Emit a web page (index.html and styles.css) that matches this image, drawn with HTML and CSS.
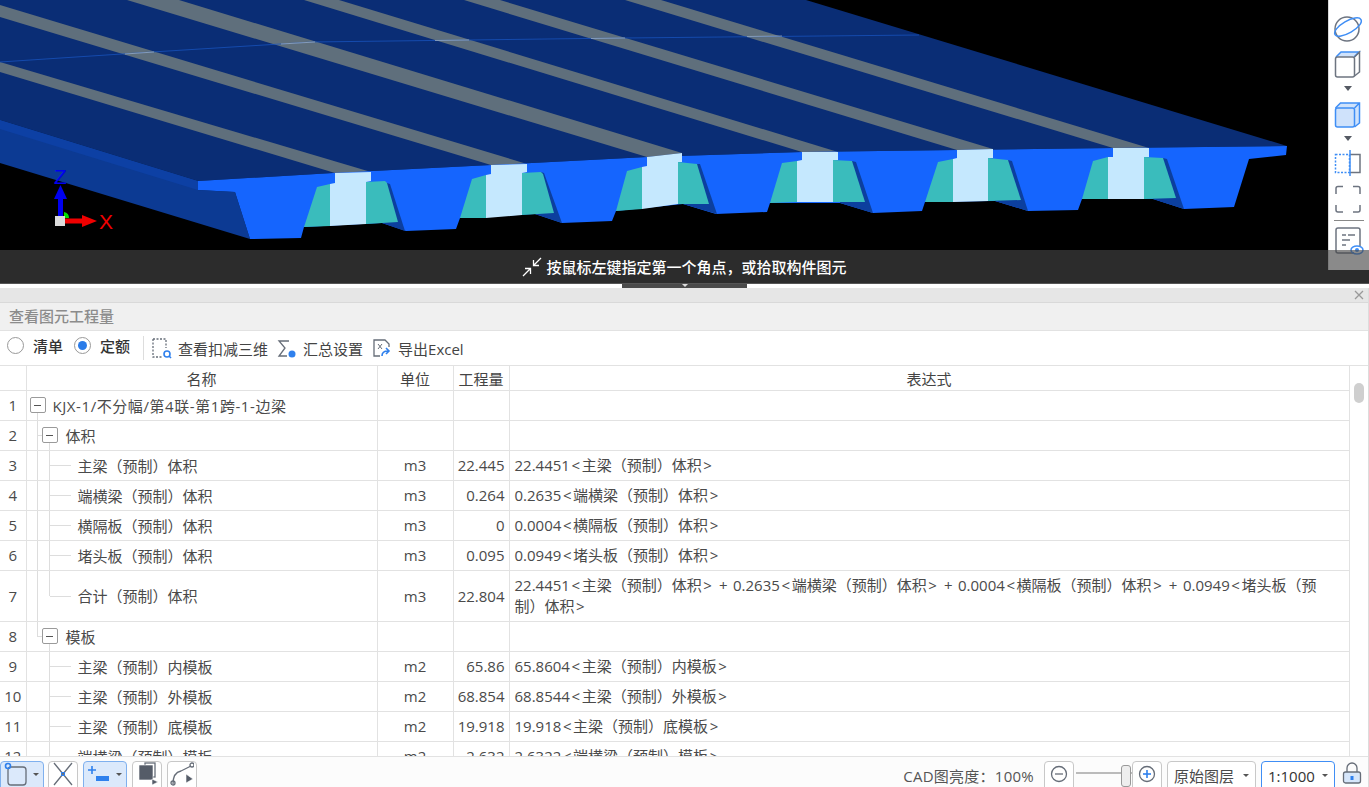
FILE: index.html
```html
<!DOCTYPE html>
<html lang="zh-CN">
<head>
<meta charset="utf-8">
<title>查看图元工程量</title>
<link rel="stylesheet" href="styles.css">
</head>
<body>
<div class="app">
  <section class="viewport">
    <svg class="scene" width="1369" height="283" viewBox="0 0 1369 283" aria-label="三维视图">
      <polygon class="deck" points="0,0 806,0 1287,146 1113,148 957,150 802,152 647,157 491,165 333,173 198,181 0,120"/>
      <g class="strip">
        <polygon points="0,62 371,172 335,173 0,72"/>
        <polygon points="0,5 527,164 491,165 0,17"/>
        <polygon points="127,0 179,0 682,153 647,157"/>
        <polygon points="304,0 339,0 838,152 802,152"/>
        <polygon points="464,0 500,0 993,149 957,150"/>
        <polygon points="625,0 661,0 1149,148 1113,148"/>
      </g>
      <polyline class="seam" points="0,62 152,52 312,42 469,40 625,38 919,35"/>
      <g class="seam-light">
        <path d="M125 54L154 52"/>
        <path d="M281 44L315 42"/>
        <path d="M435 40.500L469 40"/>
        <path d="M591 38.500L625 38"/>
        <path d="M747 36.500L782 36"/>
      </g>
      <polygon class="side" points="0,120 198,181 198,190 235,192 250,239 0,163"/>
      <polygon class="side-band" points="0,120 198,181 198,190 0,129"/>
      <polygon class="front" points="198,181 333,173 491,165 647,157 802,152 957,150 1113,148 1287,146 1286,155 1249,159 1234,207 1184,209 1153,199 1082,199 1078,210 1028,211 995,201 925,202 922,211 873,213 840,203 770,203 767,212 716,214 683,204 616,211 612,221 562,223 535,214 460,218 456,229 406,231 382,223 304,227 301,238 250,239 235,192 198,190"/>
      <g class="shade">
        <polygon points="387,183 390,184 405,231 382,223"/>
        <polygon points="541,172 544,173 562,223 535,214"/>
        <polygon points="697,164 700,164 717,214 683,204"/>
        <polygon points="852,161 856,162 873,213 840,203"/>
        <polygon points="1008,160 1012,161 1028,211 995,201"/>
        <polygon points="1163,158 1167,159 1184,209 1153,199"/>
      </g>
      <g class="teal">
        <polygon points="317,187 330,184 330,226 304,227"/>
        <polygon points="366,182 385,181 387,183 398,222 366,224"/>
        <polygon points="472,179 486,175 486,218 460,218"/>
        <polygon points="522,173 541,172 543,174 554,213 522,215"/>
        <polygon points="627,171 642,167 642,209 616,211"/>
        <polygon points="678,162 697,164 709,204 678,204"/>
        <polygon points="782,163 797,161 797,202 770,203"/>
        <polygon points="833,160 852,161 865,202 833,202"/>
        <polygon points="938,162 953,159 953,202 925,202"/>
        <polygon points="988,158 1008,160 1021,200 988,201"/>
        <polygon points="1093,161 1108,157 1108,199 1082,199"/>
        <polygon points="1144,157 1163,158 1176,198 1144,199"/>
      </g>
      <g class="light">
        <polygon points="335,173 371,172 371,181 366,182 366,224 330,226 330,184 335,183"/>
        <polygon points="491,165 527,164 527,172 522,173 522,215 486,218 486,175 491,174"/>
        <polygon points="647,157 682,153 682,162 678,162 678,204 642,209 642,167 647,166"/>
        <polygon points="802,152 838,152 838,160 833,160 833,202 797,202 797,161 802,160"/>
        <polygon points="957,150 993,149 993,158 988,158 988,201 953,202 953,159 957,158"/>
        <polygon points="1113,148 1149,148 1149,157 1144,157 1144,199 1108,199 1108,157 1113,157"/>
      </g>
      <path class="axis-green" d="M64 212a6 6 0 0 1 5 6h-5z"/>
      <rect class="axis-z" x="58" y="196" width="5" height="20"/>
      <polygon class="axis-z" points="60.500,185 67,199 54,199"/>
      <rect class="axis-x" x="65" y="218.500" width="18" height="5"/>
      <polygon class="axis-x" points="97,221 82,215 82,227"/>
      <rect class="axis-o" x="55" y="216" width="10" height="10"/>
      <text class="axis-label label-z" x="54" y="184">Z</text>
      <text class="axis-label label-x" x="99" y="229">X</text>
    </svg>

    <aside class="view-tools">
      <svg width="41" height="46" viewBox="0 0 41 46" class="vt">
        <circle cx="19" cy="29" r="12" class="g"/>
        <ellipse cx="20" cy="27" rx="15" ry="6" transform="rotate(-30 20 27)" class="b"/>
      </svg>
      <svg width="41" height="36" viewBox="0 0 41 36" class="vt">
        <path d="M8 11l5-5h18l-5 5z" class="bf"/>
        <path d="M8 11l5-5h18l-5 5" class="b"/>
        <rect x="7.500" y="11" width="19" height="20" rx="2" class="g"/>
        <path d="M26.500 11l5-5v20l-5 4" class="g"/>
      </svg>
      <svg width="41" height="14" viewBox="0 0 41 14" class="vt"><polygon points="16,4 24,4 20,9" class="tri"/></svg>
      <svg width="41" height="36" viewBox="0 0 41 36" class="vt">
        <path d="M7.500 12l5-5h19v20l-5 4H9.500a2 2 0 0 1-2-2z" class="bf"/>
        <rect x="7.500" y="12" width="19" height="19" rx="2" class="b"/>
        <path d="M7.500 12l5-5h19v20l-5 4M26.500 12l5-5" class="b"/>
      </svg>
      <svg width="41" height="14" viewBox="0 0 41 14" class="vt"><polygon points="16,4 24,4 20,9" class="tri"/></svg>
      <svg width="41" height="34" viewBox="0 0 41 34" class="vt">
        <rect x="7.500" y="8.500" width="14" height="18" class="bd"/>
        <path d="M22 8.500h10v18H22" class="g"/>
        <path d="M22 4v26" class="b"/>
      </svg>
      <svg width="41" height="36" viewBox="0 0 41 36" class="vt">
        <path d="M8 14V8.500a2 2 0 0 1 2-2h5M25 6.500h5a2 2 0 0 1 2 2V14M32 25v5a2 2 0 0 1-2 2h-5M15 32h-5a2 2 0 0 1-2-2v-5" class="g"/>
      </svg>
      <div class="vt-sep"></div>
      <svg width="41" height="46" viewBox="0 0 41 46" class="vt">
        <path d="M26 29H10a2 2 0 0 1-2-2V6a2 2 0 0 1 2-2h20a2 2 0 0 1 2 2v16" class="g"/>
        <path d="M14 11h4M20 11h7M14 16h8M14 21h4" class="g"/>
        <ellipse cx="29" cy="26" rx="6" ry="4" class="b"/>
        <circle cx="29" cy="26" r="2" class="bs"/>
      </svg>
    </aside>

    <div class="prompt">
      <svg class="prompt-icon" width="20" height="20" viewBox="0 0 20 20">
        <path d="M1 19l7-7M3 11.500h5.500V17M19 1l-7 7M17 8.500h-5.500V3"/>
      </svg>
      <span>按鼠标左键指定第一个角点，或拾取构件图元</span>
    </div>
  </section>

  <div class="splitter"><div class="splitter-handle"><i></i></div></div>

  <section class="panel">
    <div class="dock-bar"><svg class="close" width="10" height="10" viewBox="0 0 10 10"><path d="M1 1l8 8M9 1l-8 8"/></svg></div>
    <div class="panel-title">查看图元工程量</div>
    <div class="panel-tools">
      <span class="radio"></span><span class="radio-label">清单</span>
      <span class="radio on"></span><span class="radio-label">定额</span>
      <span class="tool-sep"></span>
      <span class="tool">
        <svg width="20" height="22" viewBox="0 0 20 22"><path d="M1 2h13v9M1 2v18h9" class="dash"/><circle cx="15" cy="17" r="3" class="blue"/><path d="M17 19l2 2" class="blue"/></svg>
        查看扣减三维
      </span>
      <span class="tool">
        <svg width="20" height="22" viewBox="0 0 20 22"><path d="M12 4H2l6 7-6 8h8" class="line"/><circle cx="15" cy="17" r="3.500" class="bluefill"/></svg>
        汇总设置
      </span>
      <span class="tool">
        <svg width="20" height="22" viewBox="0 0 20 22"><path d="M8 19H2V3h11l4 4v3" class="line"/><path d="M6 7l4 5M10 7l-4 5" class="thin"/><path d="M10 19c0-4 3-5 6-5M14 11l3 3-3 3" class="blue"/></svg>
        导出Excel
      </span>
    </div>

    <div class="grid-wrap">
      <table class="grid">
        <colgroup><col class="c-no"><col class="c-name"><col class="c-unit"><col class="c-qty"><col class="c-expr"></colgroup>
        <thead>
          <tr><th></th><th>名称</th><th>单位</th><th>工程量</th><th>表达式</th></tr>
        </thead>
        <tbody>
          <tr><td class="no">1</td><td><div class="node l0"><span class="box"></span><span class="root-name">KJX-1/不分幅/第4联-第1跨-1-边梁</span></div></td><td></td><td></td><td></td></tr>
          <tr><td class="no">2</td><td><div class="node l1"><span class="box"></span>体积</div></td><td></td><td></td><td></td></tr>
          <tr><td class="no">3</td><td><div class="node leaf outer">主梁（预制）体积</div></td><td class="unit">m3</td><td class="qty">22.445</td><td class="expr">22.4451<span class="ab">&lt;</span>主梁（预制）体积<span class="ab">&gt;</span></td></tr>
          <tr><td class="no">4</td><td><div class="node leaf outer">端横梁（预制）体积</div></td><td class="unit">m3</td><td class="qty">0.264</td><td class="expr">0.2635<span class="ab">&lt;</span>端横梁（预制）体积<span class="ab">&gt;</span></td></tr>
          <tr><td class="no">5</td><td><div class="node leaf outer">横隔板（预制）体积</div></td><td class="unit">m3</td><td class="qty">0</td><td class="expr">0.0004<span class="ab">&lt;</span>横隔板（预制）体积<span class="ab">&gt;</span></td></tr>
          <tr><td class="no">6</td><td><div class="node leaf outer">堵头板（预制）体积</div></td><td class="unit">m3</td><td class="qty">0.095</td><td class="expr">0.0949<span class="ab">&lt;</span>堵头板（预制）体积<span class="ab">&gt;</span></td></tr>
          <tr class="tall"><td class="no">7</td><td><div class="node leaf outer last">合计（预制）体积</div></td><td class="unit">m3</td><td class="qty">22.804</td><td class="expr">22.4451<span class="ab">&lt;</span>主梁（预制）体积<span class="ab">&gt;</span> <span class="ab">+</span> 0.2635<span class="ab">&lt;</span>端横梁（预制）体积<span class="ab">&gt;</span> <span class="ab">+</span> 0.0004<span class="ab">&lt;</span>横隔板（预制）体积<span class="ab">&gt;</span> <span class="ab">+</span> 0.0949<span class="ab">&lt;</span>堵头板（预<br>制）体积<span class="ab">&gt;</span></td></tr>
          <tr><td class="no">8</td><td><div class="node l1 end"><span class="box"></span>模板</div></td><td></td><td></td><td></td></tr>
          <tr><td class="no">9</td><td><div class="node leaf">主梁（预制）内模板</div></td><td class="unit">m2</td><td class="qty">65.86</td><td class="expr">65.8604<span class="ab">&lt;</span>主梁（预制）内模板<span class="ab">&gt;</span></td></tr>
          <tr><td class="no">10</td><td><div class="node leaf">主梁（预制）外模板</div></td><td class="unit">m2</td><td class="qty">68.854</td><td class="expr">68.8544<span class="ab">&lt;</span>主梁（预制）外模板<span class="ab">&gt;</span></td></tr>
          <tr><td class="no">11</td><td><div class="node leaf">主梁（预制）底模板</div></td><td class="unit">m2</td><td class="qty">19.918</td><td class="expr">19.918<span class="ab">&lt;</span>主梁（预制）底模板<span class="ab">&gt;</span></td></tr>
          <tr><td class="no">12</td><td><div class="node leaf">端横梁（预制）模板</div></td><td class="unit">m2</td><td class="qty">2.632</td><td class="expr">2.6322<span class="ab">&lt;</span>端横梁（预制）模板<span class="ab">&gt;</span></td></tr>
        </tbody>
      </table>
      <div class="scroll-col"><div class="scroll-thumb"></div></div>
    </div>

    <footer class="status">
      <button class="sbtn wide active first">
        <svg width="24" height="24" viewBox="0 0 24 24"><rect x="5" y="5" width="18" height="18" rx="3" class="line"/><circle cx="5" cy="4" r="2.500" class="blue"/></svg>
        <i class="caret"></i>
      </button>
      <button class="sbtn">
        <svg width="24" height="24" viewBox="0 0 24 24"><path d="M3 1l18 22M21 1L3 23" class="line"/><rect x="10.500" y="10.500" width="3" height="3" class="blue-thin"/></svg>
      </button>
      <button class="sbtn wide active">
        <svg width="24" height="24" viewBox="0 0 24 24"><path d="M2 8h8M6 4v8" class="blue"/><rect x="10" y="14" width="13" height="5" class="bluefill"/></svg>
        <i class="caret"></i>
      </button>
      <button class="sbtn">
        <svg width="24" height="24" viewBox="0 0 24 24"><rect x="10" y="1" width="10" height="14" class="line"/><rect x="4" y="3" width="14" height="15" class="darkfill"/><path d="M17 17l6 3-6 3z" class="darkfill"/></svg>
      </button>
      <button class="sbtn">
        <svg width="24" height="24" viewBox="0 0 24 24"><path d="M3 22c0-8 3-12 8-13l10-5" class="line"/><circle cx="3" cy="21" r="2" class="line"/><circle cx="22" cy="3" r="2" class="line"/><path d="M16 12l7 5-7 4z" class="darkfill"/></svg>
      </button>
      <div class="status-right">
        <span class="cad-label">CAD图亮度：100%</span>
        <button class="sbtn zoom-btn"><svg width="18" height="18" viewBox="0 0 18 18"><circle cx="9" cy="9" r="7.500" class="line"/><path d="M5 9h8" class="line"/></svg></button>
        <div class="slider"><span class="slider-thumb"></span></div>
        <button class="sbtn zoom-btn"><svg width="18" height="18" viewBox="0 0 18 18"><circle cx="9" cy="9" r="7.500" class="line"/><path d="M5 9h8" class="blue"/><path d="M9 5v8" class="blue"/></svg></button>
        <div class="select layer">原始图层<i class="caret"></i></div>
        <div class="select scale">1:1000<i class="caret"></i></div>
        <svg class="lock" width="20" height="22" viewBox="0 0 20 22"><path d="M5 10V6a5 5 0 0 1 10 0v4" class="line"/><rect x="1.500" y="10" width="17" height="11" rx="2" class="lockbody"/><rect x="8.500" y="14" width="3" height="4" class="bluefill"/></svg>
      </div>
    </footer>
  </section>
</div>
</body>
</html>
```
FILE: styles.css
```css
* { box-sizing: border-box; }
html, body { margin: 0; padding: 0; height: 100%; overflow: hidden; background: #fff; }
body { font-family: "Open Sans", "Noto Sans CJK SC", sans-serif; font-size: 15px; color: #4a4a4a; }
.app { display: flex; flex-direction: column; width: 1369px; height: 787px; overflow: hidden; }

/* 3D viewport */
.viewport { position: relative; height: 283px; flex: none; background: #000; overflow: hidden; }
.scene { display: block; }
.deck { fill: #0a2d75; }
.strip polygon { fill: #5f6f7c; }
.seam { fill: none; stroke: #1a57c4; stroke-width: 1; opacity: .7; }
.seam-light path { fill: none; stroke: #a9b6bf; stroke-width: 1; opacity: .7; }
.side { fill: #0c3a93; }
.side-band { fill: #0d40a4; }
.front { fill: #1565fe; }
.shade polygon { fill: #0c3f9e; }
.teal polygon { fill: #3abcbc; }
.light polygon { fill: #c5e8fe; }
.axis-z { fill: #0000f0; }
.axis-x { fill: #f00000; }
.axis-o { fill: #dcdcdc; }
.axis-green { fill: #00e000; }
.axis-label { font-family: "Liberation Sans", sans-serif; font-size: 21px; }
.label-z { fill: #0000f0; }
.label-x { fill: #f00000; }

.view-tools { position: absolute; top: 0; right: 0; width: 41px; height: 270px; background: #fff; border-left: 1px solid #d8d8d8; overflow: hidden; }
.vt { display: block; margin-left: -1px; }
.vt .g { fill: none; stroke: #6d7480; stroke-width: 1.500; }
.vt .b { fill: none; stroke: #3f8ef5; stroke-width: 1.500; }
.vt .bd { fill: none; stroke: #3f8ef5; stroke-width: 1.500; stroke-dasharray: 2 1.500; }
.vt .bf { fill: #cfe2fb; }
.vt .bs { fill: #3f8ef5; }
.vt .tri { fill: #555a63; }
.vt-sep { height: 1px; margin: 4px 5px 3px 5px; background: #888; }

.prompt { position: absolute; left: 0; right: 0; bottom: 0; height: 33px; background: rgba(70, 70, 70, .63); display: flex; align-items: center; justify-content: center; gap: 4px; color: #fff; font-size: 15px; font-weight: 500; }
.prompt-icon { fill: none; stroke: #fff; stroke-width: 1.300; }

/* Splitter */
.splitter { height: 5px; flex: none; background: #fff; border-top: 1px solid #555; display: flex; justify-content: center; }
.splitter-handle { width: 125px; height: 4px; background: #4a4a4a; display: flex; justify-content: center; }
.splitter-handle i { width: 0; height: 0; border: 3px solid transparent; border-top-color: #ddd; border-bottom: 0; }

/* Panel */
.panel { flex: 1; min-height: 0; display: flex; flex-direction: column; border-right: 1px solid #dcdcdc; }
.dock-bar { height: 15px; flex: none; background: #e6e6e6; border-bottom: 1px solid #d9d9d9; display: flex; justify-content: flex-end; align-items: center; padding-right: 4px; }
.close { fill: none; stroke: #999; stroke-width: 1.300; }
.panel-title { height: 28px; flex: none; background: #f0f0f0; border-bottom: 1px solid #e2e2e2; padding-left: 9px; line-height: 26px; color: #8c8c8c; font-weight: 500; }
.panel-tools { height: 34px; flex: none; display: flex; align-items: center; padding-left: 7px; color: #444; }
.radio { width: 17px; height: 17px; margin-bottom: 6px; border: 1px solid #999; border-radius: 50%; background: #fff; display: flex; align-items: center; justify-content: center; flex: none; }
.radio.on::after { content: ""; width: 9px; height: 9px; border-radius: 50%; background: #2a7be8; }
.radio-label { margin: 0 11px 4px 9px; color: #333; font-weight: 500; line-height: 1; }
.tool-sep { width: 1px; height: 24px; background: #ddd; margin: 0 8px 0 2px; }
.tool { display: flex; align-items: center; gap: 6px; margin-right: 9px; }
.line { fill: none; stroke: #666d78; stroke-width: 1.300; }
.thin { fill: none; stroke: #666d78; stroke-width: 1; }
.dash { fill: none; stroke: #666d78; stroke-width: 1.300; stroke-dasharray: 2 1.500; }
.blue { fill: none; stroke: #2f80ed; stroke-width: 1.600; }
.blue-thin { fill: none; stroke: #2f80ed; stroke-width: 1; }
.bluefill { fill: #2f80ed; }
.darkfill { fill: #555c68; stroke: #fff; stroke-width: .6; }
.lockbody { fill: #d6e6fa; stroke: #666d78; stroke-width: 1.300; }

/* Table */
.grid-wrap { flex: 1; min-height: 0; display: flex; overflow: hidden; border-top: 1px solid #e2e2e2; border-bottom: 1px solid #e2e2e2; }
.grid { table-layout: fixed; width: 1349px; flex: none; border-collapse: collapse; align-self: flex-start; }
.c-no { width: 26px; }
.c-name { width: 351px; }
.c-unit { width: 76px; }
.c-qty { width: 56px; }
.c-expr { width: 840px; }
.grid th, .grid td { border: 1px solid #e2e2e2; border-top: 0; padding: 0; overflow: hidden; }
.grid th:first-child, .grid td:first-child { border-left: 0; }
.grid th { height: 24px; font-weight: 400; text-align: center; line-height: 1; padding-top: 4px; color: #444; }
.grid td { height: 30px; }
.grid tr.tall td { height: 51px; }
.no { text-align: center; }
.unit { text-align: center; }
.qty { text-align: right; padding-right: 4px !important; }
.expr { padding-left: 5px !important; line-height: 21px; white-space: nowrap; }
.ab { margin: 0 1.600px; }
.node { position: relative; height: 29px; display: flex; align-items: center; }
.tall .node { height: 50px; }
.node.l0 { padding-left: 3px; }
.node.l1 { padding-left: 15px; background: linear-gradient(#ddd, #ddd) 22px 22px / 1px 100% no-repeat; }
.node.leaf { padding-left: 51px; }
.node.outer { background: linear-gradient(#ddd, #ddd) 10px 0 / 1px 100% no-repeat; }
.root-name { letter-spacing: .57px; }
.box { width: 16px; height: 16px; border: 1px solid #9a9a9a; border-radius: 2px; margin-right: 8px; display: flex; align-items: center; justify-content: center; flex: none; background: #fff; position: relative; z-index: 1; }
.l0 .box { margin-right: 7px; }
.box::after { content: ""; width: 7px; height: 1px; background: #555; }
.node::before, .node::after { content: ""; position: absolute; background: #ddd; }
.l0::before { left: 10px; top: 22px; bottom: 0; width: 1px; }
.l0::after { display: none; }
.l1::before { left: 10px; top: -1px; bottom: 0; width: 1px; }
.l1.end::before { bottom: 14px; }
.l1::after { left: 10px; top: 14px; width: 6px; height: 1px; }
.leaf::before { left: 22px; top: -1px; bottom: 0; width: 1px; }
.leaf::after { left: 23px; top: 14px; width: 21px; height: 1px; }
.leaf.last::before { bottom: 25px; }
.tall .node.leaf::after { top: 25px; }
.scroll-col { flex: 1; position: relative; }
.scroll-thumb { position: absolute; top: 17px; left: 4px; width: 10px; height: 20px; border-radius: 5px; background: #cfcfcf; }

/* Status bar */
.status { height: 30px; flex: none; display: flex; align-items: flex-start; padding-top: 4px; gap: 5px; background: #fcfcfc; overflow: hidden; }
.sbtn { width: 30px; height: 30px; flex: none; padding: 0; border: 1px solid #c8c8c8; border-radius: 4px; background: #fff; display: flex; align-items: center; justify-content: center; gap: 6px; }
.sbtn.wide { width: 44px; padding: 0 4px 4px 2px; justify-content: space-between; }
.sbtn.first { margin-right: -1px; }
.sbtn svg { flex: none; }
.sbtn:not(.wide):not(.zoom-btn) { padding-bottom: 4px; }
.sbtn.active { background: #dbe9fb; border-color: #7fb0ee; }
.caret { width: 0; height: 0; border: 3.500px solid transparent; border-top-color: #555; border-bottom: 0; flex: none; }
.status-right { margin-left: auto; display: flex; align-items: flex-start; padding-right: 6px; gap: 5px; }
.cad-label { margin-right: 5px; padding-top: 3px; line-height: 24px; color: #555; white-space: nowrap; letter-spacing: .25px; }
.zoom-btn { padding-bottom: 4px; }
.slider { width: 58px; height: 24px; margin: 0 -5px; position: relative; }
.slider::before { content: ""; position: absolute; left: 2px; right: 0; top: 11px; height: 2px; background: #bbb; }
.slider-thumb { position: absolute; right: 1px; top: 4px; width: 10px; height: 22px; border: 1px solid #999; border-radius: 3px; background: #eee; }
.select { height: 30px; border: 1px solid #c8c8c8; border-radius: 4px; background: #fff; display: flex; align-items: flex-start; justify-content: space-between; padding: 2px 6px 0; line-height: 24px; white-space: nowrap; }
.select .caret { margin-top: 10px; }
.layer { width: 89px; }
.scale { width: 74px; border-color: #3f8ef5; color: #333; }
.lock { margin-left: 2px; margin-top: 1px; }
```
